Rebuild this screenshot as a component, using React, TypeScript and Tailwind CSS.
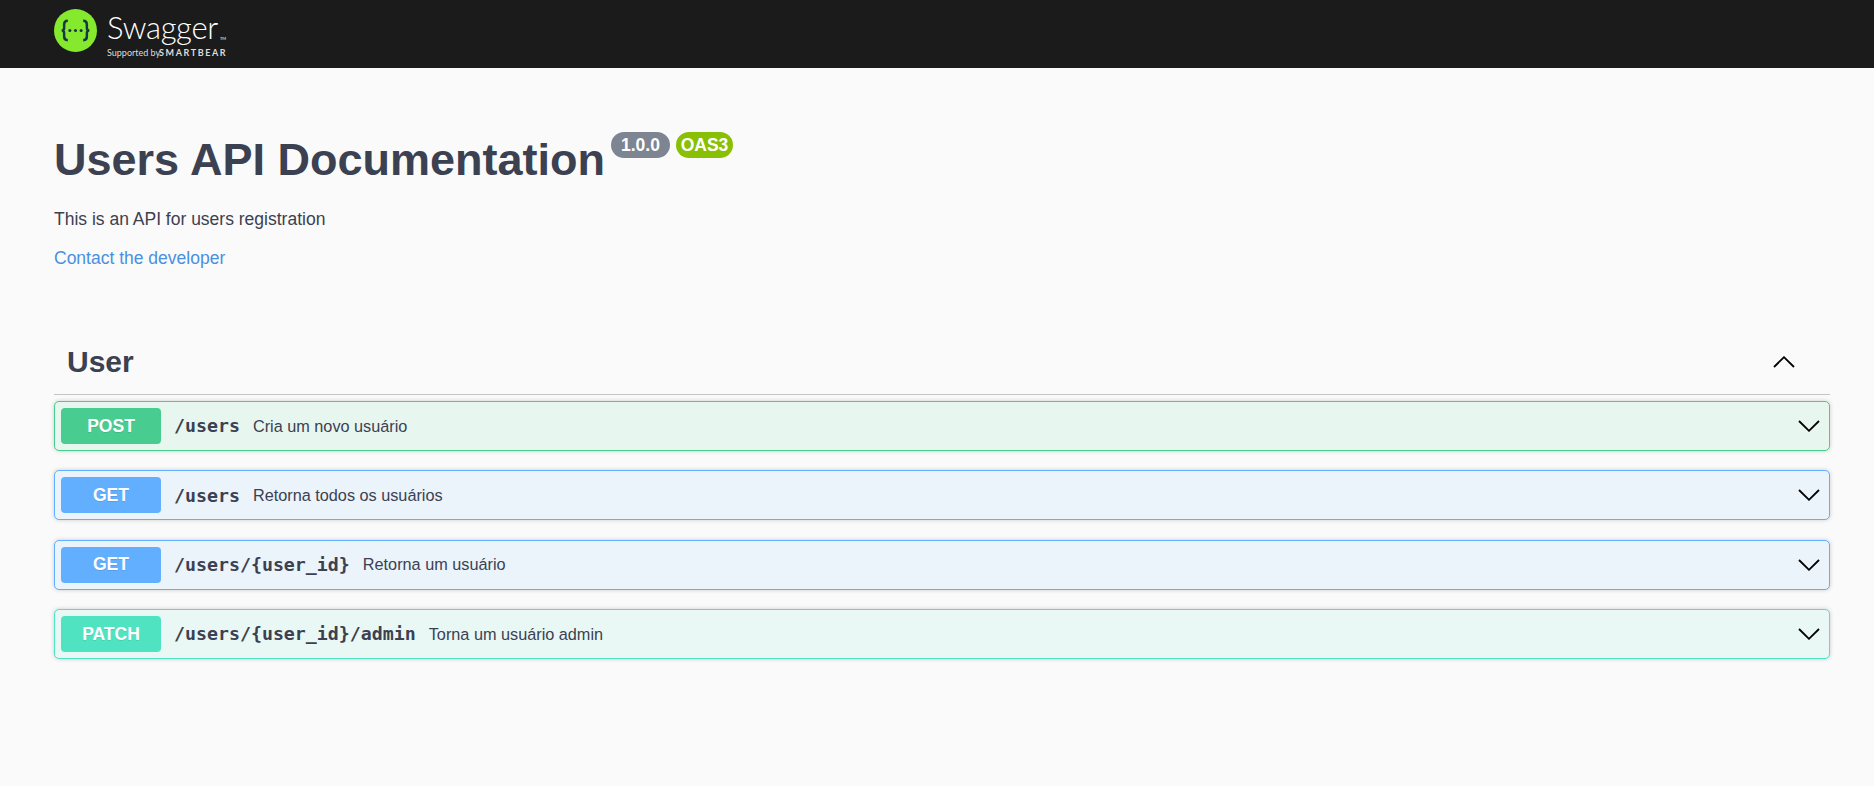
const operations = [
  {
    method: "POST",
    path: "/users",
    summary: "Cria um novo usuário",
    block: "border-[#49cc90] bg-[#e8f6f0]",
    badge: "bg-[#49cc90]",
  },
  {
    method: "GET",
    path: "/users",
    summary: "Retorna todos os usuários",
    block: "border-[#61affe] bg-[#ebf3fb]",
    badge: "bg-[#61affe]",
  },
  {
    method: "GET",
    path: "/users/{user_id}",
    summary: "Retorna um usuário",
    block: "border-[#61affe] bg-[#ebf3fb]",
    badge: "bg-[#61affe]",
  },
  {
    method: "PATCH",
    path: "/users/{user_id}/admin",
    summary: "Torna um usuário admin",
    block: "border-[#50e3c2] bg-[#e9f8f5]",
    badge: "bg-[#50e3c2]",
  },
];

function Arrow({ up }: { up?: boolean }) {
  return (
    <svg width="22" height="12" viewBox="0 0 22 12" className="flex-none">
      <path
        d={up ? "M1 11L11 1.2L21 11" : "M1 1L11 10.8L21 1"}
        fill="none"
        stroke="#000"
        strokeWidth="1.8"
      />
    </svg>
  );
}

function SwaggerLogo() {
  return (
    <div className="flex items-center gap-[10px]">
      <svg width="43" height="43" viewBox="0 0 42 42" className="mt-[-7px]">
        <circle cx="21" cy="21" r="21" fill="#85ea2d" />
        <path
          d="M13.5 11.5c-3 0-3.6 1.4-3.6 3.6v3.4c0 1.6-.8 2.5-2.4 2.5 1.6 0 2.4.9 2.4 2.5v3.4c0 2.2.6 3.6 3.6 3.6M28.5 11.5c3 0 3.6 1.4 3.6 3.6v3.4c0 1.6.8 2.5 2.4 2.5-1.6 0-2.4.9-2.4 2.5v3.4c0 2.2-.6 3.6-3.6 3.6"
          fill="none"
          stroke="#173647"
          strokeWidth="2.4"
        />
        <circle cx="15.5" cy="21" r="1.5" fill="#173647" />
        <circle cx="21" cy="21" r="1.5" fill="#173647" />
        <circle cx="26.5" cy="21" r="1.5" fill="#173647" />
      </svg>
      <div className="flex flex-col text-white font-['Lato',sans-serif]">
        <div className="flex h-[32px] items-end">
          <span className="text-[31px] leading-[32px] font-light tracking-[-0.3px]">Swagger</span>
          <span className="ml-[2px] text-[4px] leading-[8px]">TM</span>
        </div>
        <div className="mt-[4px] flex h-[10px] items-center whitespace-nowrap text-[#dcdcdc]">
          <span className="w-[52px] text-[9px] leading-none">Supported by</span>
          <span className="text-[9px] leading-none font-bold tracking-[1.6px]">SMARTBEAR</span>
        </div>
      </div>
    </div>
  );
}

export default function App() {
  return (
    <div className="min-h-[786px] bg-[#fafafa] text-[#3b4151] font-['Liberation_Sans',Arial,sans-serif]">
      {/* Topbar */}
      <div className="flex h-[68px] items-center bg-[#1b1b1b] pl-[54px]">
        <SwaggerLogo />
      </div>

      <div className="pl-[54px] pr-[44px]">
        {/* Info */}
        <div className="flex items-start pt-[64px]">
          <h1 className="mt-[2px] text-[45px] leading-[52px] font-bold">Users API Documentation</h1>
          <span className="ml-[6px] flex h-[26px] w-[59px] items-center justify-center rounded-[13px] bg-[#7d8492] text-[17.5px] font-bold text-white">
            1.0.0
          </span>
          <span className="ml-[6px] flex h-[26px] w-[57px] items-center justify-center rounded-[13px] bg-[#89bf04] text-[17.5px] font-bold text-white">
            OAS3
          </span>
        </div>
        <p className="mt-[19.5px] text-[17.5px] leading-[26px] text-[#3b4151]">
          This is an API for users registration
        </p>
        <a className="mt-[13.5px] block text-[17.5px] leading-[26px] text-[#4990e2]">
          Contact the developer
        </a>

        {/* Tag section */}
        <div className="mt-[59px] flex h-[65px] items-center justify-between border-b border-[#c4c4c7] pl-[13px] pr-[35px]">
          <h3 className="text-[30px] font-bold leading-[40px] text-[#3b4151]">User</h3>
          <Arrow up />
        </div>

        {/* Operations */}
        <div className="mt-[6px]">
          {operations.map((op) => (
            <div
              key={op.method + op.path}
              className={`mb-[19.25px] flex h-[50px] items-center rounded-[5px] border pl-[6px] pr-[9px] shadow-[0_0_4px_rgba(0,0,0,0.19)] ${op.block}`}
            >
              <span
                className={`flex h-[36px] w-[100px] flex-none items-center justify-center rounded-[4px] text-[17.5px] font-bold text-white [text-shadow:0_1px_0_rgba(0,0,0,0.1)] ${op.badge}`}
              >
                {op.method}
              </span>
              <span className="ml-[13px] text-[18.25px] font-bold text-[#3b4151] font-['DejaVu_Sans_Mono',monospace]">
                {op.path}
              </span>
              <span className="ml-[13px] text-[16.25px] text-[#3b4151]">{op.summary}</span>
              <div className="ml-auto">
                <Arrow />
              </div>
            </div>
          ))}
        </div>
      </div>
    </div>
  );
}
